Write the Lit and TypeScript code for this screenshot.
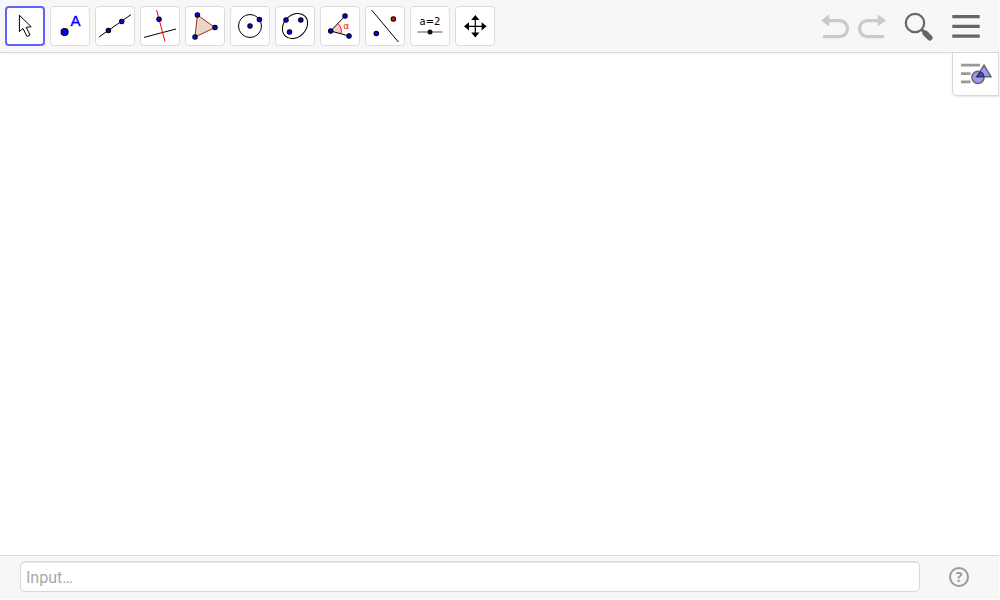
import { LitElement, html, svg, css } from "lit";
import { customElement, state } from "lit/decorators.js";

const dot = (x: number, y: number, fill = "#0000ff", r = 2.2) =>
  svg`<circle cx=${x} cy=${y} r=${r} fill=${fill} stroke="#000" stroke-width="1.1" />`;

const tools = [
  {
    name: "Move",
    icon: svg`<path d="M10.4 5.2V21.6L14 18.5L18 26.5L21 25L17.2 17.3L22.2 16.8Z" fill="#fff" stroke="#000" />`,
  },
  {
    name: "Point",
    icon: svg`${dot(10.6, 22, "#0000ff", 3.5)}<text class="point-label" x="21.5" y="16">A</text>`,
  },
  {
    name: "Line",
    icon: svg`<path d="M0 27L32 4.6" stroke="#000" />${dot(9.4, 20.6)}${dot(22.7, 11.4)}`,
  },
  {
    name: "Perpendicular Line",
    icon: svg`<path d="M0 27.4L32 19" stroke="#000" /><path d="M12.6 0L21 31.6" stroke="#f00" />${dot(15, 9.3)}`,
  },
  {
    name: "Polygon",
    icon: svg`<path d="M8.4 5L26 17.6L6 27Z" fill="#ebd6cc" stroke="#993300" />${dot(8.4, 5)}${dot(26, 17.6)}${dot(6, 27)}`,
  },
  {
    name: "Circle with Center through Point",
    icon: svg`<circle cx="16" cy="16" r="11.5" fill="none" stroke="#000" />${dot(16, 16)}${dot(25.4, 9.4)}`,
  },
  {
    name: "Ellipse",
    icon: svg`<ellipse cx="16" cy="16" rx="14" ry="11" transform="rotate(-45 16 16)" fill="none" stroke="#000" />${dot(7, 10)}${dot(21.8, 10)}${dot(10.5, 22)}`,
  },
  {
    name: "Angle",
    icon: svg`<path d="M6.7 21L13.8 13.5A10.5 10.5 0 0 1 17 23.8Z" fill="#fcc" /><path d="M13.8 13.5A10.5 10.5 0 0 1 17 23.8" fill="none" stroke="#f00" /><path d="M21 6L6.7 21L25 26" fill="none" stroke="#000" />${dot(6.7, 21)}${dot(21, 6)}${dot(25, 26)}<text class="angle-label" x="22.3" y="19">α</text>`,
  },
  {
    name: "Reflect about Line",
    icon: svg`<path d="M2.6 0L29.4 32" stroke="#000" />${dot(7.3, 23.4)}${dot(24.4, 9, "#ff0000")}`,
  },
  {
    name: "Slider",
    icon: svg`<text class="slider-label" x="16" y="15">a=2</text><path d="M3.5 22H28.5" stroke="#555" /><circle cx="16" cy="22" r="2.5" fill="#111" />`,
  },
  {
    name: "Move Graphics View",
    icon: svg`<path d="M16.3 7V25M7 16.3H25" stroke="#000" stroke-width="1.2" /><path d="M16.3 5L20.4 10H12.2ZM16.3 27.6L20.4 22.6H12.2ZM5 16.3L10 12.2V20.4ZM27.6 16.3L22.6 12.2V20.4Z" />`,
  },
];

@customElement("app-root")
export class AppRoot extends LitElement {
  static styles = css`
    :host {
      display: flex;
      flex-direction: column;
      box-sizing: border-box;
      min-height: 100vh;
      padding: 0 1px 1px 0;
      background: #fff;
      font-family: Roboto, "Noto Sans", sans-serif;
    }
    * {
      box-sizing: border-box;
    }
    button {
      display: flex;
      align-items: center;
      justify-content: center;
      margin: 0;
      padding: 0;
      border: 0;
      background: none;
      font: inherit;
      cursor: pointer;
    }
    svg {
      display: block;
      flex: none;
    }
    .header {
      display: flex;
      align-items: center;
      justify-content: space-between;
      height: 53px;
      padding: 0 15px 0 5px;
      border-bottom: 1px solid #d8d8d8;
      background: #f7f7f7;
      box-shadow: 0 1px 2px #0000000c;
    }
    .tools {
      display: flex;
      gap: 5px;
    }
    .tool {
      width: 40px;
      height: 40px;
      border: 1px solid #dcdcdc;
      border-radius: 4px;
      background: #fff;
    }
    .tool.selected {
      border: 2px solid #6161ff;
    }
    .point-label,
    .angle-label,
    .slider-label {
      text-anchor: middle;
    }
    .point-label {
      font: 15px "Liberation Sans", sans-serif;
      fill: #00f;
      stroke: #00f;
      stroke-width: 0.4px;
    }
    .angle-label {
      font: 9px "DejaVu Sans", sans-serif;
      fill: #f00;
    }
    .slider-label {
      font: 10px "DejaVu Sans", sans-serif;
      fill: #000;
    }
    .actions {
      display: flex;
      align-items: center;
    }
    .undo {
      margin-right: 4px;
    }
    .redo {
      margin-right: 16px;
    }
    .search {
      margin-right: 13px;
    }
    .undo:disabled,
    .redo:disabled {
      cursor: default;
    }
    .graphics {
      display: flex;
      flex: 1;
      align-items: flex-start;
      justify-content: flex-end;
    }
    .style-toggle {
      width: 47px;
      height: 43px;
      border: 1px solid #d8d8d8;
      border-top: 0;
      border-radius: 0 0 0 5px;
      background: #fff;
      box-shadow: 0 1px 2px #0000001c;
    }
    .footer {
      display: flex;
      align-items: center;
      height: 44px;
      padding: 0 29px 2px 20px;
      border-top: 1px solid #d8d8d8;
      background: #f7f7f7;
    }
    .entry {
      flex: 1;
      min-width: 0;
      height: 31px;
      margin-right: 28px;
      padding: 2px 5px 0;
      border: 1px solid #d8d8d8;
      border-radius: 5px;
      outline: 0;
      background: #fff;
      box-shadow: inset 0 1px 1px #0000001a;
      color: #000;
      font: 16px Roboto, "Noto Sans", sans-serif;
    }
    .entry::placeholder {
      color: #a9a9a9;
      opacity: 1;
    }
    .help {
      width: 22px;
      height: 22px;
    }
    .help-ring {
      display: flex;
      align-items: center;
      justify-content: center;
      width: 20px;
      height: 20px;
      border: 2px solid #999;
      border-radius: 50%;
      color: #999;
      font: 700 14px "Open Sans", "Noto Sans", sans-serif;
      line-height: 16px;
    }
  `;

  @state() private selected = "Move";

  render() {
    return html`
      <header class="header">
        <div class="tools" role="toolbar" aria-label="Tools">
          ${tools.map(
            (tool) => html`
              <button
                class="tool ${tool.name === this.selected ? "selected" : ""}"
                aria-label=${tool.name}
                aria-pressed=${tool.name === this.selected}
                @click=${() => (this.selected = tool.name)}
              >
                <svg width="32" height="32" viewBox="0 0 32 32">${tool.icon}</svg>
              </button>
            `
          )}
        </div>
        <div class="actions">
          <button class="undo" aria-label="Undo" disabled>
            <svg width="32" height="32" viewBox="0 0 32 32">
              <path d="M9 10.6H20C31.3 10.6 31.3 26.6 20 26.6H4" fill="none" stroke="#cacaca" stroke-width="3.2" />
              <path d="M2 10.4L10.3 4.2V16.6Z" fill="#cacaca" />
            </svg>
          </button>
          <button class="redo" aria-label="Redo" disabled>
            <svg width="32" height="32" viewBox="0 0 32 32">
              <path d="M24 10.6H13C1.7 10.6 1.7 26.6 13 26.6H29" fill="none" stroke="#cacaca" stroke-width="3.2" />
              <path d="M31 10.4L22.7 4.2V16.6Z" fill="#cacaca" />
            </svg>
          </button>
          <button class="search" aria-label="Search">
            <svg width="32" height="32" viewBox="0 0 32 32">
              <circle cx="12" cy="13" r="9.2" fill="none" stroke="#666" stroke-width="2.2" />
              <path d="M18.5 19.5L22 23" stroke="#666" stroke-width="3" />
              <path d="M22.3 23.3L26.8 27.8" stroke="#666" stroke-width="5.6" stroke-linecap="round" />
            </svg>
          </button>
          <button aria-label="Menu">
            <svg width="36" height="32" viewBox="0 0 36 32">
              <path d="M4.3 6.7H31.7M4.3 16.4H31.7M4.3 26.1H31.7" stroke="#666" stroke-width="3.2" />
            </svg>
          </button>
        </div>
      </header>
      <main class="graphics">
        <button class="style-toggle" aria-label="Style Bar">
          <svg width="32" height="24" viewBox="0 0 32 24">
            <path d="M1 3.2H20M1 11.6H10.5M1 19.9H10.5" stroke="#999" stroke-width="2.8" />
            <circle cx="18" cy="15.3" r="6.1" fill="#9999ff" stroke="#666" stroke-width="1.5" />
            <path d="M24 3.2L31 14.8H16.7Z" fill="#9999ff" stroke="#666" stroke-width="1.5" />
            <path d="M20.6 9.8A6 6 0 0 1 23.9 14.6H17Z" fill="#4d4dcc" stroke="#333355" stroke-width="1.3" />
          </svg>
        </button>
      </main>
      <footer class="footer">
        <input class="entry" type="text" aria-label="Input" placeholder="Input…" />
        <button class="help" aria-label="Help"><span class="help-ring">?</span></button>
      </footer>
    `;
  }
}
